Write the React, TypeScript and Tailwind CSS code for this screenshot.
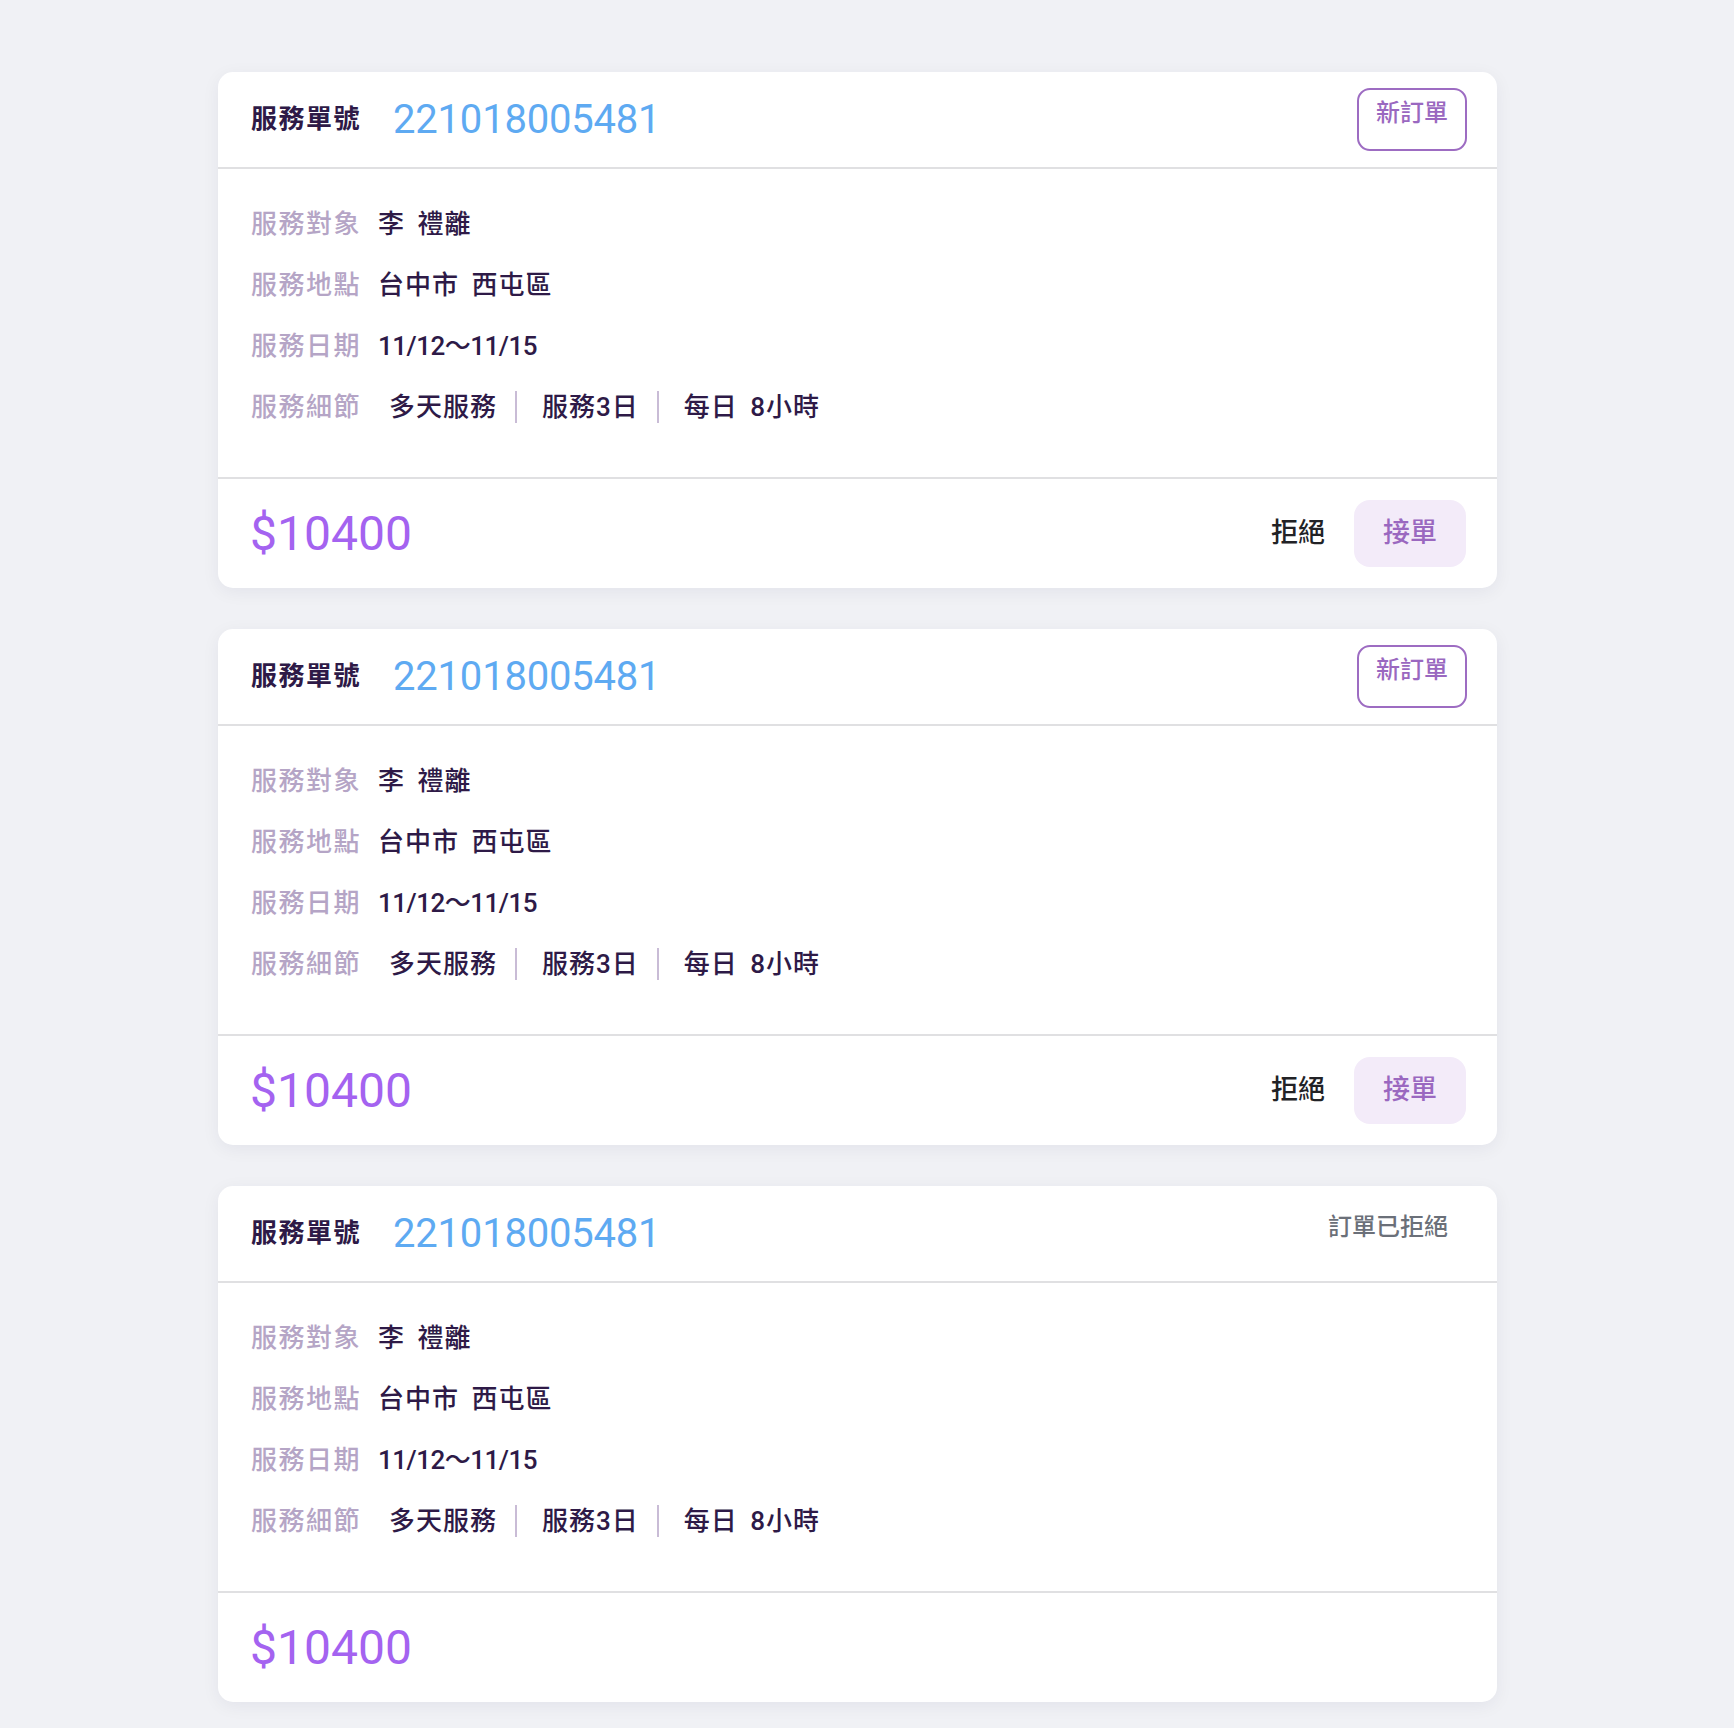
import React from "react";

type Order = { status: "new" | "rejected" };

const orders: Order[] = [{ status: "new" }, { status: "new" }, { status: "rejected" }];

const FONT = { fontFamily: 'Roboto, "Noto Sans CJK TC", sans-serif' };

function Row({ label, children }: { label: string; children: React.ReactNode }) {
  return (
    <div className="flex items-center h-[40px]">
      <span className="text-[26px] leading-[40px] tracking-[1.5px] font-medium text-[#b5a5c6]">{label}</span>
      <div className="ml-[17px] flex items-center text-[26px] leading-[40px] tracking-[1px] [word-spacing:5px] font-medium text-[#2e1a47]">
        {children}
      </div>
    </div>
  );
}

function Card({ order }: { order: Order }) {
  return (
    <div className="w-[1279px] bg-white rounded-[15px] shadow-[0_4px_18px_rgba(20,20,60,0.06)] overflow-hidden">
      <div className="h-[97px] flex items-center justify-between pl-[33px] pr-[30px] border-b-2 border-[#e0e0e2]">
        <div className="flex items-center">
          <span className="text-[26px] tracking-[1.5px] font-semibold text-[#2e1a47]">服務單號</span>
          <span className="ml-[32px] text-[40px] leading-[48px] tracking-[-0.2px] text-[#5eaaf2]">221018005481</span>
        </div>
        {order.status === "new" ? (
          <div className="border-2 border-[#9d6cc2] rounded-[13px] px-[17px] pt-[8px] pb-[21px] text-[24px] leading-[30px] font-medium text-[#9a68c0]">
            新訂單
          </div>
        ) : (
          <div className="border-2 border-transparent px-[17px] pt-[8px] pb-[21px] text-[24px] leading-[30px] font-medium text-[#6b7079]">
            訂單已拒絕
          </div>
        )}
      </div>
      <div className="pl-[33px] pt-[35px] pb-[50px] flex flex-col gap-[21px]">
        <Row label="服務對象">李 禮離</Row>
        <Row label="服務地點">台中市 西屯區</Row>
        <Row label="服務日期">
          <span className="tracking-[-0.5px]">11/12～11/15</span>
        </Row>
        <Row label="服務細節">
          <span className="ml-[11px]">多天服務</span>
          <span className="ml-[18px] w-[2px] h-[32px] bg-[#c9bcd6]" />
          <span className="ml-[25px]">服務3日</span>
          <span className="ml-[18px] w-[2px] h-[32px] bg-[#c9bcd6]" />
          <span className="ml-[25px]">每日 8小時</span>
        </Row>
      </div>
      <div className="h-[111px] border-t-2 border-[#e0e0e2] flex items-center justify-between pl-[32px] pr-[31px]">
        <span className="text-[48px] leading-[56px] text-[#a463f0]">$10400</span>
        {order.status === "new" && (
          <div className="flex items-center gap-[29px]">
            <button className="text-[27px] font-medium text-[#222226]">拒絕</button>
            <button className="h-[67px] w-[112px] rounded-[16px] bg-[#f3ebf9] text-[27px] font-medium text-[#9a68c0]">
              接單
            </button>
          </div>
        )}
      </div>
    </div>
  );
}

export default function App() {
  return (
    <div className="min-h-[1728px] bg-[#f0f1f5] pl-[218px] pt-[72px] pb-[72px] flex flex-col gap-[41px]" style={FONT}>
      {orders.map((o, i) => (
        <Card key={i} order={o} />
      ))}
    </div>
  );
}
